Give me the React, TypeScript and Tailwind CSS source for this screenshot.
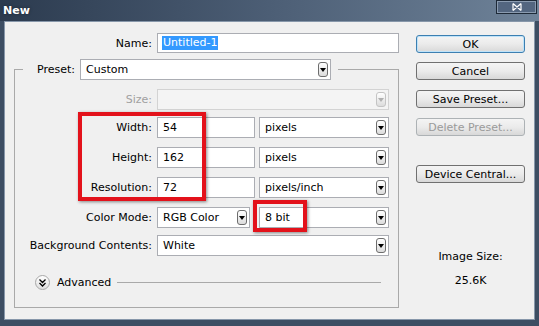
import React from "react";

function Arrow({ disabled = false }: { disabled?: boolean }) {
  return (
    <div
      className={`mr-[2px] w-[10px] h-[15px] rounded-[3px] border flex items-center justify-center bg-gradient-to-b from-white to-[#dcdcdc] ${
        disabled ? "border-[#c4c4c4]" : "border-[#6d6d6d]"
      }`}
    >
      <svg width="6" height="4" viewBox="0 0 6 4">
        <path d="M0 0h6L3 4z" fill={disabled ? "#b0b0b0" : "#000"} />
      </svg>
    </div>
  );
}

function Select({ w, value }: { w: string; value: string }) {
  return (
    <div className={`h-[21px] ${w} border border-[#abadb3] bg-white flex items-center justify-between pl-[5px]`}>
      <span>{value}</span>
      <Arrow />
    </div>
  );
}

function Input({ w, value }: { w: string; value: string }) {
  return (
    <div className={`h-[21px] ${w} border border-[#abadb3] bg-white flex items-center pl-[5px]`}>
      {value}
    </div>
  );
}

function Row({
  label,
  mt,
  children,
  muted = false,
}: {
  label: string;
  mt: string;
  children: React.ReactNode;
  muted?: boolean;
}) {
  return (
    <div className={`flex items-center ${mt}`}>
      <div className={`w-[137px] text-right ${muted ? "text-[#a0a0a0]" : ""}`}>{label}</div>
      <div className="ml-[5px] flex gap-[4px]">{children}</div>
    </div>
  );
}

function Button({ label, mt, variant }: { label: string; mt: string; variant?: "default" | "disabled" }) {
  const border =
    variant === "default"
      ? "border-[#3c7fb1] shadow-[inset_0_0_0_1px_#bfe3f9]"
      : variant === "disabled"
      ? "border-[#adb2b5] text-[#9a9a9a]"
      : "border-[#707070]";
  return (
    <div
      className={`${mt} h-[18px] w-[109px] rounded-[3px] border bg-gradient-to-b from-[#f4f4f4] via-[#ebebeb] to-[#d8d8d8] flex items-center justify-center ${border}`}
    >
      {label}
    </div>
  );
}

export default function App() {
  return (
    <div className="relative w-[539px] h-[326px] overflow-hidden flex flex-col bg-[#3d4e63] font-['DejaVu_Sans',sans-serif] text-[11px] leading-[13px] text-black">
      {/* title bar */}
      <div className="h-[21px] flex items-start justify-between bg-gradient-to-r from-[#2c3b4f] via-[#4c5e75] to-[#6f8399]">
        <span className="ml-[3px] mt-[4px] font-bold text-white [text-shadow:0_0_3px_#1a2533]">New</span>
        <div className="mr-[2px] w-[41px] h-[14px] border border-[#1e2a38] bg-[#536680] shadow-[inset_0_0_0_1px_#8a9bb0] flex items-center justify-center">
          <svg width="10" height="8" viewBox="0 0 10 8">
            <path d="M1 0.5L9 7.5M9 0.5L1 7.5M1 0.5v7M9 0.5v7" stroke="#fff" strokeWidth="1.2" fill="none" />
          </svg>
        </div>
      </div>

      {/* client area */}
      <div className="flex-1 mx-[4px] mb-[6px] bg-[#f0f0f0] border border-[#8797aa] flex">
        <div className="w-[395px] pt-[11px]">
          <div className="flex items-center">
            <div className="w-[147px] text-right">Name:</div>
            <div className="ml-[5px] h-[20px] w-[242px] border border-[#abadb3] bg-white flex items-center pl-[4px]">
              <span className="bg-[#3399ff] text-white px-[1px] leading-[14px]">Untitled-1</span>
            </div>
          </div>

          <fieldset className="mt-[6px] ml-[9px] w-[385px] border border-[#a9a9a9] pb-[17px]">
            <legend className="ml-[8px] pr-[7px] flex items-center">
              <div className="w-[52px] text-right">Preset:</div>
              <div className="ml-[5px]">
                <Select w="w-[251px]" value="Custom" />
              </div>
            </legend>

            <Row label="Size:" mt="mt-[9px]" muted>
              <div className="h-[21px] w-[232px] border border-[#d3d3d3] bg-[#f4f4f4] flex items-center justify-end">
                <Arrow disabled />
              </div>
            </Row>
            <Row label="Width:" mt="mt-[7px]">
              <Input w="w-[98px]" value="54" />
              <Select w="w-[130px]" value="pixels" />
            </Row>
            <Row label="Height:" mt="mt-[9px]">
              <Input w="w-[98px]" value="162" />
              <Select w="w-[130px]" value="pixels" />
            </Row>
            <Row label="Resolution:" mt="mt-[9px]">
              <Input w="w-[98px]" value="72" />
              <Select w="w-[130px]" value="pixels/inch" />
            </Row>
            <Row label="Color Mode:" mt="mt-[9px]">
              <Select w="w-[93px]" value="RGB Color" />
              <div className="ml-[5px]">
                <Select w="w-[130px]" value="8 bit" />
              </div>
            </Row>
            <Row label="Background Contents:" mt="mt-[7px]">
              <Select w="w-[232px]" value="White" />
            </Row>

            <div className="mt-[19px] ml-[20px] flex items-center">
              <div className="w-[15px] h-[15px] rounded-full border border-[#a8a8a8] bg-gradient-to-b from-white to-[#dedede] flex items-center justify-center">
                <svg width="7" height="8" viewBox="0 0 7 8">
                  <path d="M0.5 0.5L3.5 3.5L6.5 0.5M0.5 4L3.5 7L6.5 4" stroke="#000" strokeWidth="1.3" fill="none" />
                </svg>
              </div>
              <span className="ml-[7px]">Advanced</span>
              <div className="ml-[6px] w-[264px] h-px bg-[#a9a9a9]" />
            </div>
          </fieldset>
        </div>

        <div className="ml-[16px] w-[109px] flex flex-col items-center pt-[13px]">
          <Button label="OK" mt="mt-0" variant="default" />
          <Button label="Cancel" mt="mt-[9px]" />
          <Button label="Save Preset..." mt="mt-[10px]" />
          <Button label="Delete Preset..." mt="mt-[10px]" variant="disabled" />
          <Button label="Device Central..." mt="mt-[29px]" />
          <div className="mt-[67px]">Image Size:</div>
          <div className="mt-[11px]">25.6K</div>
        </div>
      </div>

      {/* red annotation boxes */}
      <div className="absolute left-[78px] top-[112px] w-[128px] h-[89px] border-4 border-[#e3121b] shadow-[1px_1px_3px_rgba(0,0,0,0.45)]" />
      <div className="absolute left-[253px] top-[200px] w-[54px] h-[32px] border-4 border-[#e3121b] shadow-[1px_1px_3px_rgba(0,0,0,0.45)]" />
    </div>
  );
}
